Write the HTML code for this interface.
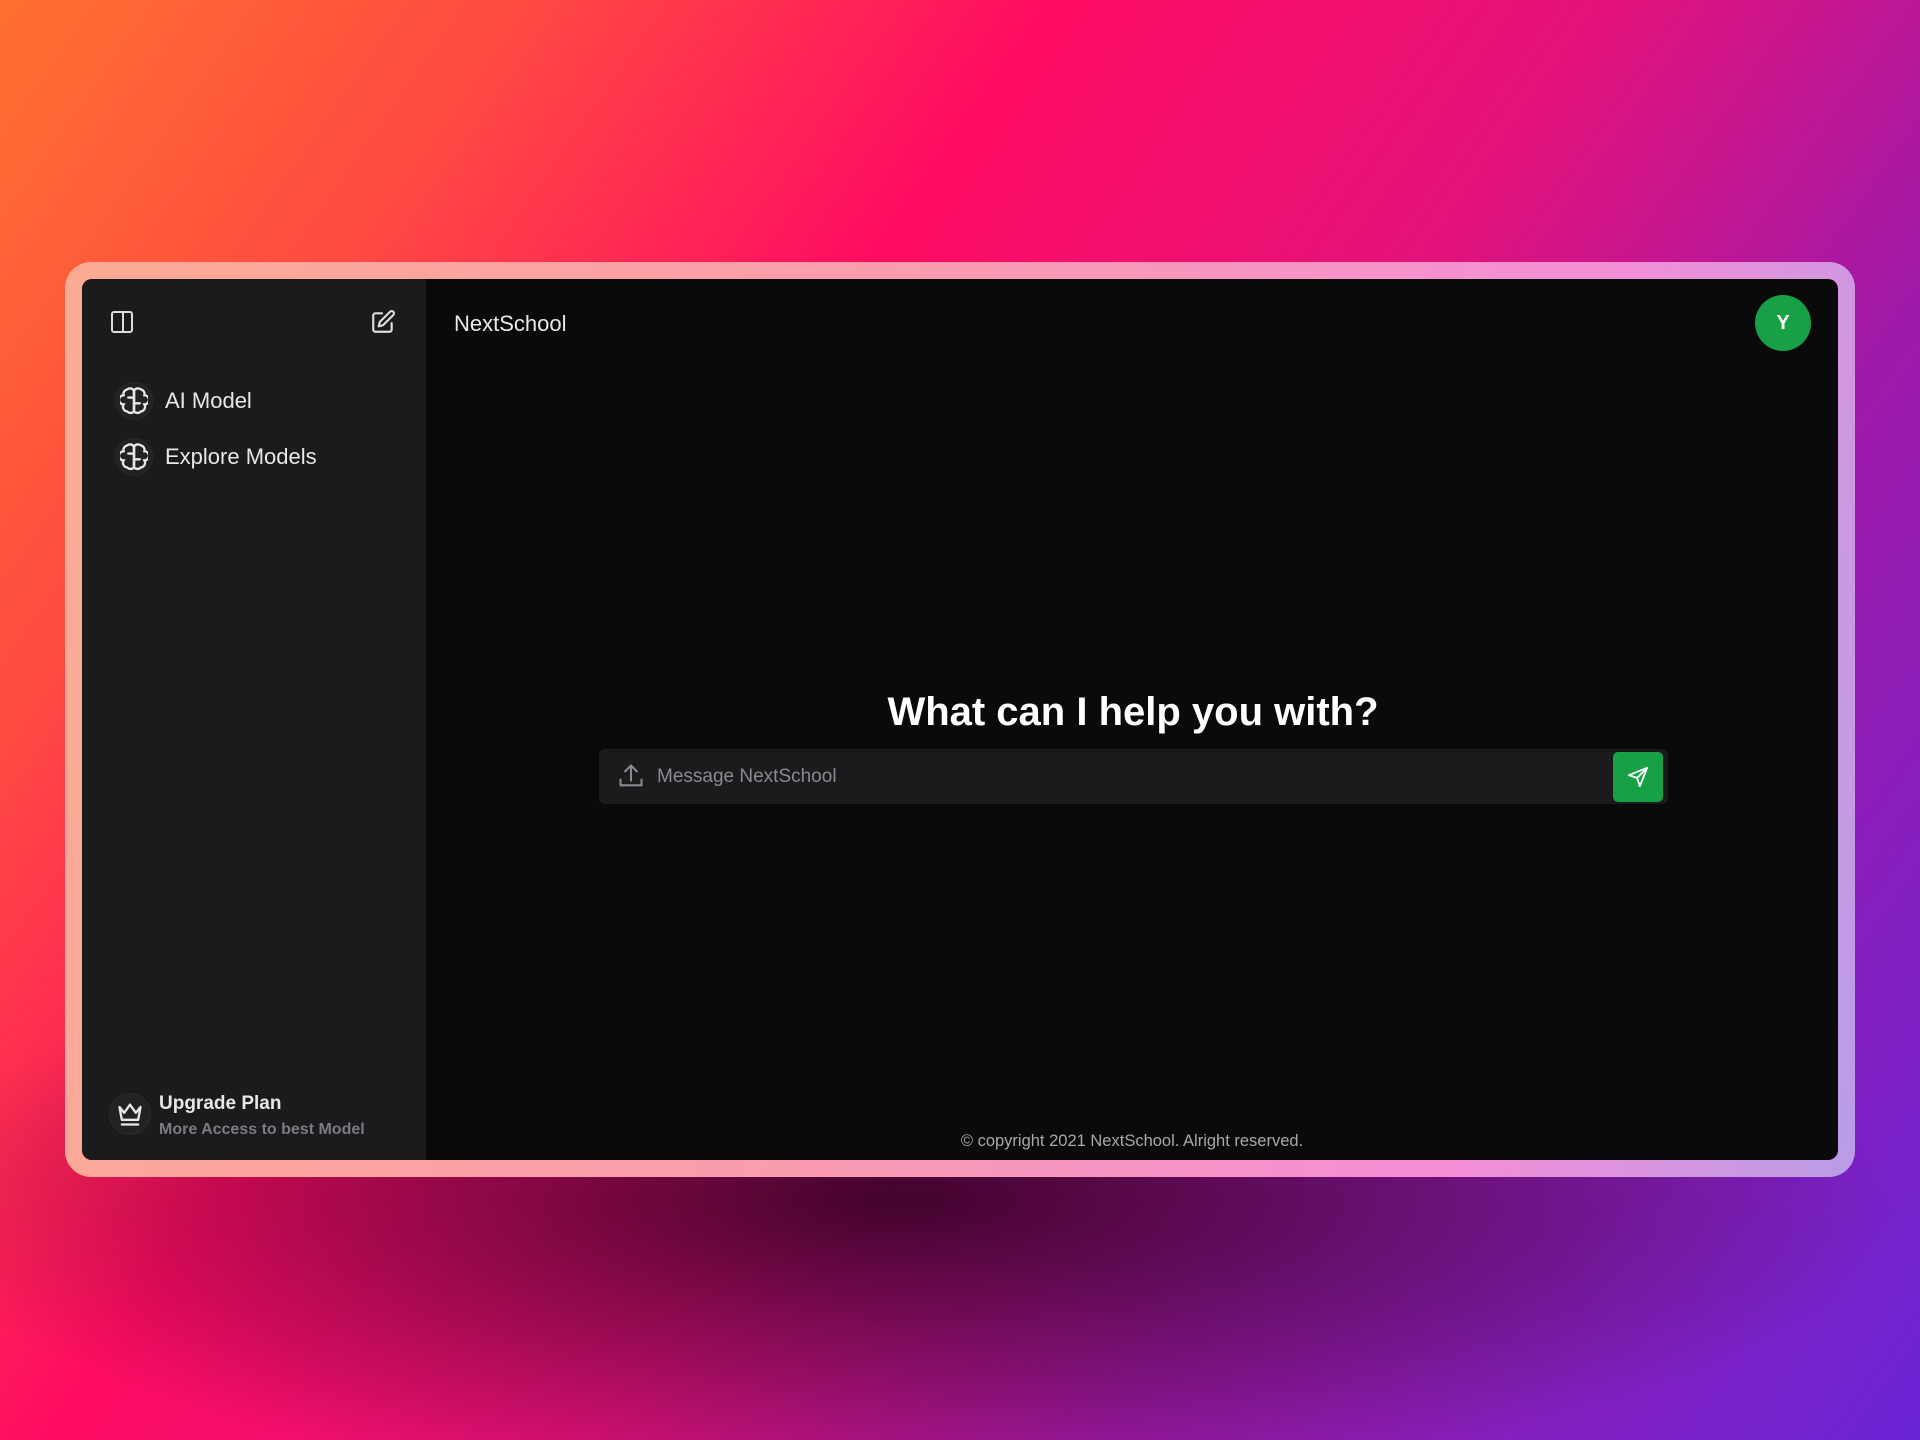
<!DOCTYPE html>
<html><head><meta charset="utf-8"><style>
*{margin:0;padding:0;box-sizing:border-box}
html,body{width:1920px;height:1440px;overflow:hidden}
body{font-family:"Liberation Sans",sans-serif;position:relative;
background:
radial-gradient(ellipse 1000px 300px at 900px 1200px,rgba(40,0,30,0.85),rgba(40,0,40,0) 100%),
linear-gradient(125deg,#ff7030 0%,#ff4a42 18%,#ff0c62 36%,#e3127a 55%,#a11aa8 72%,#6a25d6 100%);}
.frame{position:absolute;left:65px;top:262px;width:1790px;height:915px;border-radius:26px;
background:linear-gradient(100deg,#fbab93 0%,#fb9bb0 45%,#f38fd8 80%,#b99ce6 100%);}
.win{position:absolute;left:82px;top:279px;width:1756px;height:881px;border-radius:10px;overflow:hidden;background:#0a0a0b}
.side{position:absolute;left:0;top:0;width:344px;height:100%;background:#1b1b1d}
.t{position:absolute;color:#e8e8e8;white-space:nowrap}
.ic{position:absolute}
.circ{position:absolute;border-radius:50%;background:#222225;border:1px solid #2a2a2d}
</style></head><body>
<div class="frame"></div>
<div class="win">
 <div class="side">
  <svg class="ic" style="left:28px;top:31px" width="24" height="24" viewBox="0 0 24 24" fill="none" stroke="#ddd" stroke-width="2"><rect x="2" y="2" width="20" height="20" rx="2"/><line x1="13" y1="2" x2="13" y2="22"/></svg>
  <svg class="ic" style="left:288px;top:30px" width="26" height="26" viewBox="0 0 24 24" fill="none" stroke="#ddd" stroke-width="2" stroke-linecap="round" stroke-linejoin="round"><path d="M11 4H5a2 2 0 0 0-2 2v13a2 2 0 0 0 2 2h13a2 2 0 0 0 2-2v-6"/><path d="M18.5 2.5a2.1 2.1 0 0 1 3 3L12 15l-4 1 1-4z"/></svg>
  <div class="circ" style="left:33px;top:103px;width:38px;height:38px"></div>
  <svg class="ic" style="left:38px;top:107px" width="28" height="30" viewBox="0 0 24 26" fill="none" stroke="#e8e8e8" stroke-width="2" stroke-linecap="round"><path d="M12 4a4 4 0 0 0-6-1 4 4 0 0 0-3 5 4 4 0 0 0 0 8 4 4 0 0 0 3 6 4 4 0 0 0 6 0z"/><path d="M12 4a4 4 0 0 1 6-1 4 4 0 0 1 3 5 4 4 0 0 1 0 8 4 4 0 0 1-3 6 4 4 0 0 1-6 0z"/><path d="M12 4v18M7 10h5M12 15h5"/></svg>
  <div class="t" style="left:83px;top:109px;font-size:22px">AI Model</div>
  <div class="circ" style="left:33px;top:159px;width:38px;height:38px"></div>
  <svg class="ic" style="left:38px;top:163px" width="28" height="30" viewBox="0 0 24 26" fill="none" stroke="#e8e8e8" stroke-width="2" stroke-linecap="round"><path d="M12 4a4 4 0 0 0-6-1 4 4 0 0 0-3 5 4 4 0 0 0 0 8 4 4 0 0 0 3 6 4 4 0 0 0 6 0z"/><path d="M12 4a4 4 0 0 1 6-1 4 4 0 0 1 3 5 4 4 0 0 1 0 8 4 4 0 0 1-3 6 4 4 0 0 1-6 0z"/><path d="M12 4v18M7 10h5M12 15h5"/></svg>
  <div class="t" style="left:83px;top:165px;font-size:22px">Explore Models</div>
  <div class="circ" style="left:27px;top:814px;width:42px;height:42px"></div>
  <svg class="ic" style="left:34px;top:821px" width="28" height="28" viewBox="0 0 24 24" fill="none" stroke="#e8e8e8" stroke-width="2" stroke-linejoin="round" stroke-linecap="round"><path d="M3 6l4 5 5-7 5 7 4-5-2 11H5z"/><line x1="5" y1="21" x2="19" y2="21"/></svg>
  <div class="t" style="left:77px;top:814px;font-size:19px;font-weight:bold">Upgrade Plan</div>
  <div class="t" style="left:77px;top:842px;font-size:16px;font-weight:bold;color:#7c7c80">More Access to best Model</div>
 </div>
 <div class="t" style="left:372px;top:32px;font-size:22px">NextSchool</div>
 <div style="position:absolute;left:1673px;top:16px;width:56px;height:56px;border-radius:50%;background:#17a046;color:#fff;font-size:20px;font-weight:bold;text-align:center;line-height:56px">Y</div>
 <div class="t" style="left:0;width:2102px;text-align:center;top:411px;font-size:40px;font-weight:bold;color:#fff">What can I help you with?</div>
 <div style="position:absolute;left:517px;top:470px;width:1069px;height:55px;border-radius:6px;background:#1b1b1d">
  <svg class="ic" style="left:18px;top:13px" width="28" height="28" viewBox="0 0 24 24" fill="none" stroke="#8a8a8e" stroke-width="1.8" stroke-linecap="round" stroke-linejoin="round"><path d="M3 15v5h18v-5"/><path d="M12 16V3M7 8l5-5 5 5"/></svg>
  <div class="t" style="left:58px;top:17px;font-size:19px;color:#8a8a8e">Message NextSchool</div>
  <div style="position:absolute;left:1014px;top:3px;width:50px;height:50px;border-radius:5px;background:#17a046">
   <svg class="ic" style="left:14px;top:14px" width="22" height="22" viewBox="0 0 24 24" fill="none" stroke="#fff" stroke-width="2" stroke-linejoin="round"><path d="M22 2L2 10l9 3 3 9z"/><path d="M22 2L11 13"/></svg>
  </div>
 </div>
 <div class="t" style="left:344px;width:1412px;text-align:center;top:853px;font-size:16.5px;color:#a8a8ac">© copyright 2021 NextSchool. Alright reserved.</div>
</div>
</body></html>
